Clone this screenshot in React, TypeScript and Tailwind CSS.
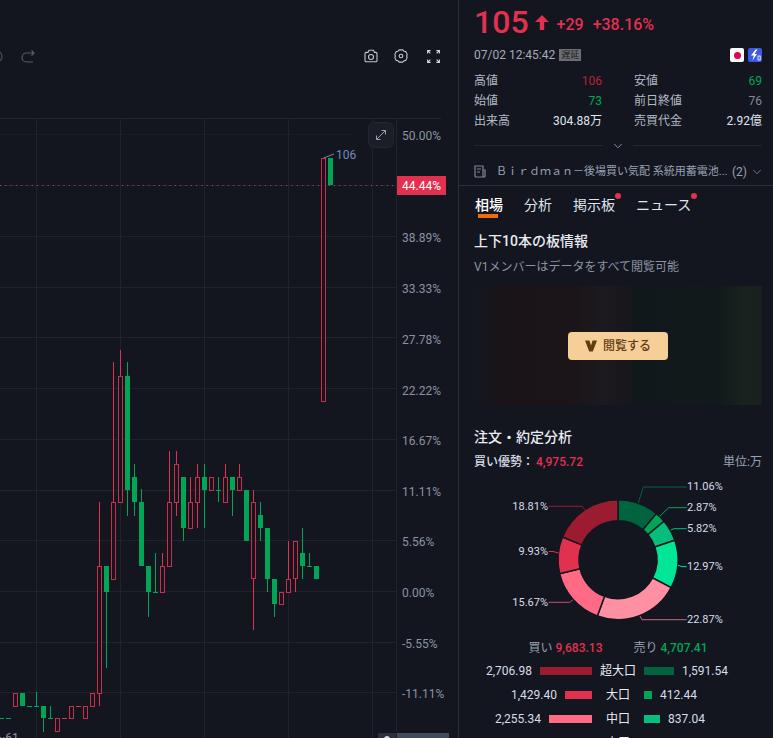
import React from "react";
import { ChevronDown } from "lucide-react";

const G = true;
const R = false;

// wickTop, wickBottom, bodyTop, bodyBottom, slot, isGreen
const candles: [number, number, number, number, number, boolean][] = [
    [718, 718, 718, 718, 0, G],
    [718, 718, 718, 718, 1, G],
    [693, 706, 693, 706, 2, R],
    [693, 706, 693, 706, 3, G],
    [706, 706, 706, 706, 4, G],
    [692, 706, 706, 706, 5, G],
    [706, 732, 706, 718, 6, G],
    [706, 718, 718, 718, 7, G],
    [718, 731, 718, 731, 8, R],
    [718, 718, 718, 718, 9, R],
    [706, 718, 706, 718, 10, R],
    [706, 706, 706, 706, 11, R],
    [706, 718, 706, 718, 12, R],
    [693, 706, 693, 706, 13, R],
    [502, 706, 566, 693, 14, R],
    [566, 668, 566, 592, 15, G],
    [362, 579, 502, 579, 16, R],
    [350, 502, 376, 502, 17, R],
    [362, 516, 376, 490, 18, G],
    [464, 516, 477, 502, 19, G],
    [489, 566, 502, 566, 20, G],
    [566, 617, 566, 592, 21, G],
    [553, 592, 592, 592, 22, G],
    [553, 592, 566, 592, 23, R],
    [451, 566, 502, 566, 24, R],
    [451, 516, 464, 502, 25, R],
    [477, 541, 477, 528, 26, G],
    [477, 528, 502, 528, 27, R],
    [464, 528, 477, 502, 28, R],
    [464, 528, 477, 490, 29, G],
    [477, 490, 477, 490, 30, R],
    [477, 502, 490, 490, 31, G],
    [464, 502, 477, 502, 32, R],
    [477, 516, 477, 490, 33, G],
    [464, 490, 477, 490, 34, R],
    [490, 541, 490, 541, 35, G],
    [490, 630, 502, 578, 36, R],
    [502, 541, 515, 528, 37, G],
    [528, 592, 528, 579, 38, G],
    [579, 617, 579, 604, 39, G],
    [592, 604, 592, 604, 40, R],
    [541, 592, 579, 592, 41, R],
    [541, 592, 541, 578, 42, R],
    [528, 579, 553, 566, 43, G],
    [553, 566, 566, 566, 44, G],
    [566, 579, 566, 579, 45, G],
    [158, 401, 158, 401, 46, R],
    [158, 185, 158, 185, 47, G],
];

const axisLabels: [string, number][] = [
    ["50.00%", 136],
    ["38.89%", 238],
    ["33.33%", 289],
    ["27.78%", 340],
    ["22.22%", 391],
    ["16.67%", 441],
    ["11.11%", 492],
    ["5.56%", 542],
    ["0.00%", 593],
    ["-5.55%", 644],
    ["-11.11%", 694],
];

const gridY = [185.5, 236.5, 287.5, 337.5, 388.5, 439.5, 490.5, 540.5, 591.5, 642.5, 692.5];

function CandleChart() {
    return (
        <svg viewBox="0 118 457 620" className="absolute inset-0 h-[620px] w-[457px]">
            <line x1="0" y1="118.5" x2="441" y2="118.5" stroke="#23262f" />
            <line x1="0" y1="134.5" x2="353" y2="134.5" stroke="#1a1d25" />
            {gridY.map((y) => (
                <line key={y} x1="0" y1={y} x2="396" y2={y} stroke="#20232b" />
            ))}
            {[36.5, 120.5, 204.5, 288.5, 372.5, 396.5].map((x) => (
                <line key={x} x1={x} y1="118" x2={x} y2="738" stroke="#20232b" />
            ))}
            <line x1="0" y1="185.5" x2="397" y2="185.5" stroke="#c04a60" strokeDasharray="1 4.3" />
            {candles.map(([wt, wb, bt, bb, i, green]) => {
                const x = 1.5 + 7 * i;
                const c = green ? "#00a656" : "#e2304f";
                return (
                    <g key={i}>
                        {wt < bt && <line x1={x} y1={wt} x2={x} y2={bt} stroke={c} />}
                        {wb > bb && <line x1={x} y1={bb} x2={x} y2={wb} stroke={c} />}
                        {bt === bb ? (
                            <rect x={x - 2.5} y={bt} width="5" height="1" fill={c} />
                        ) : green ? (
                            <rect x={x - 2.5} y={bt} width="5" height={bb - bt} fill={c} />
                        ) : (
                            <rect x={x - 2} y={bt + 0.5} width="4" height={bb - bt} fill="#13161f" stroke={c} strokeOpacity="0.9" />
                        )}
                    </g>
                );
            })}
            <path d="M323.5 158 L334 154" stroke="#7d8594" fill="none" />
            <text x="336" y="159" className="fill-[#6f8cc0] text-[12px]">106</text>
            {axisLabels.map(([t, y]) => (
                <text key={t} x="402" y={y + 4} className="fill-[#8a93a3] text-[12px]">
                    {t}
                </text>
            ))}
            <text x="-3" y="742" className="fill-[#8a93a3] text-[12px]">~61</text>
            <rect x="378" y="733" width="18" height="5" fill="#2b303b" />
            <rect x="397" y="733" width="52" height="5" fill="#414b5c" />
            <circle cx="387" cy="739" r="3" fill="#d5d8de" />
        </svg>
    );
}

function Toolbar() {
    return (
        <div className="flex h-[118px] items-center justify-between pb-[6px] pr-[18px]">
            <div className="-ml-[11px] flex items-center gap-[18px]">
                <svg viewBox="0 0 14 13" className="h-[13px] w-[14px]" fill="none" stroke="#4d5059" strokeWidth="1.2">
                    <path d="M0 1 H7.5 a5.5 5.5 0 0 1 0 11 H0" />
                </svg>
                <svg viewBox="0 0 14 13" className="h-[13px] w-[14px]" fill="none" stroke="#5a5d66" strokeWidth="1.2">
                    <path d="M13 3 H5.5 a4.5 4.5 0 0 0 0 9 H12 M10.5 0.5 L13 3 L10.5 5.5" />
                </svg>
            </div>
            <div className="flex items-center">
                <svg viewBox="0 0 14 14" className="h-[14px] w-[14px]" fill="none" stroke="#c3c7cf" strokeWidth="1.1">
                    <path d="M1 4.6 a1.2 1.2 0 0 1 1.2-1.2 H4 L5 1.2 H9.5 L10.5 3.4 H11.8 A1.2 1.2 0 0 1 13 4.6 V11.6 a1.2 1.2 0 0 1-1.2 1.2 H2.2 A1.2 1.2 0 0 1 1 11.6 Z" />
                    <circle cx="7" cy="8" r="2.5" />
                </svg>
                <svg viewBox="0 0 14 14" className="ml-4 h-[14px] w-[14px]" fill="none" stroke="#c3c7cf" strokeWidth="1.1">
                    <path d="M5.2 0.9 H8.8 L10 2.2 L11.9 2.6 L13.2 5.6 L12.6 7 L13.2 8.4 L11.9 11.4 L10 11.8 L8.8 13.1 H5.2 L4 11.8 L2.1 11.4 L0.8 8.4 L1.4 7 L0.8 5.6 L2.1 2.6 L4 2.2 Z" strokeLinejoin="round" />
                    <circle cx="7" cy="7" r="1.8" />
                </svg>
                <svg viewBox="0 0 13 13" className="ml-[19px] h-[13px] w-[13px]" fill="none" stroke="#d5d8de" strokeWidth="1.1">
                    <path d="M0.6 3.6 V0.6 H3.6 M0.8 0.8 L3.4 3.4 M9.4 0.6 H12.4 V3.6 M12.2 0.8 L9.6 3.4 M0.6 9.4 V12.4 H3.6 M0.8 12.2 L3.4 9.6 M12.4 9.4 V12.4 H9.4 M12.2 12.2 L9.6 9.6" />
                </svg>
            </div>
        </div>
    );
}

function Stat({ label, value, tone }: { label: string; value: string; tone: string }) {
    return (
        <div className="flex h-5 items-center justify-between text-[12px]">
            <span className="text-[#b4bac5]">{label}</span>
            <span className={tone}>{value}</span>
        </div>
    );
}

const slices = [
    { pct: 11.06, color: "#00643f" },
    { pct: 2.87, color: "#00a656" },
    { pct: 5.82, color: "#06bd7c" },
    { pct: 12.97, color: "#00e596" },
    { pct: 22.87, color: "#ff8fa3" },
    { pct: 15.67, color: "#ff6b84" },
    { pct: 9.93, color: "#e2304f" },
    { pct: 18.81, color: "#9b1c30" },
];

const donutLabels = [
    { t: "11.06%", x: 229, y: 14, anchor: "start", line: "M180.3 31 L185.3 15 H228.7", color: "#00643f" },
    { t: "2.87%", x: 229, y: 35, anchor: "start", line: "M201.7 44.3 L210.7 35.7 H228.7", color: "#00a656" },
    { t: "5.82%", x: 229, y: 56, anchor: "start", line: "M212.7 58 L216 56.7 H228.7", color: "#06bd7c" },
    { t: "12.97%", x: 229, y: 94, anchor: "start", line: "M220 93.3 L224 94.7 H228.7", color: "#00e596" },
    { t: "22.87%", x: 229, y: 147, anchor: "start", line: "M182 144 L184 147.7 H228.7", color: "#c96a7e" },
    { t: "15.67%", x: 90, y: 130, anchor: "end", line: "M115 127.7 L111.7 130.3 H90.7", color: "#c0536a" },
    { t: "9.93%", x: 90, y: 79, anchor: "end", line: "M100.7 81 L95 79.5 L90.7 79.5", color: "#e2304f" },
    { t: "18.81%", x: 90, y: 34, anchor: "end", line: "M127 37.7 L124 34.3 H90.7", color: "#9b1c30" },
];

function arcPath(start: number, end: number, cx: number, cy: number, ro: number, ri: number) {
    const p = (a: number, r: number) => {
        const rad = ((a - 90) * Math.PI) / 180;
        return `${cx + r * Math.cos(rad)} ${cy + r * Math.sin(rad)}`;
    };
    const large = end - start > 180 ? 1 : 0;
    return `M${p(start, ro)} A${ro} ${ro} 0 ${large} 1 ${p(end, ro)} L${p(end, ri)} A${ri} ${ri} 0 ${large} 0 ${p(start, ri)} Z`;
}

function Donut() {
    let acc = 0;
    return (
        <svg viewBox="0 0 315 166" className="-ml-4 h-[166px] w-[315px]">
            {slices.map((s) => {
                const start = acc * 3.6;
                acc += s.pct;
                return (
                    <path
                        key={s.pct}
                        d={arcPath(start, acc * 3.6, 160, 87.7, 60, 39)}
                        fill={s.color}
                        stroke="#13161f"
                        strokeWidth="1.5"
                    />
                );
            })}
            {donutLabels.map((l) => (
                <g key={l.t}>
                    <path d={l.line} stroke={l.color} fill="none" />
                    <text x={l.x} y={l.y + 4} textAnchor={l.anchor as "start" | "end"} className="fill-[#d6dde8] text-[11px]">
                        {l.t}
                    </text>
                </g>
            ))}
        </svg>
    );
}

const flowRows = [
    { buy: "2,706.98", buyBar: "w-[52px] bg-[#9b1c30]", name: "超大口", sellBar: "w-[30px] bg-[#00643f]", sell: "1,591.54" },
    { buy: "1,429.40", buyBar: "w-[27px] bg-[#e2304f]", name: "大口", sellBar: "w-[8px] bg-[#00a656]", sell: "412.44" },
    { buy: "2,255.34", buyBar: "w-[43px] bg-[#ff6b84]", name: "中口", sellBar: "w-[16px] bg-[#06bd7c]", sell: "837.04" },
    { buy: "", buyBar: "", name: "小口", sellBar: "", sell: "" },
];

function SidePanel() {
    return (
        <div className="h-[738px] w-[315px] shrink-0 overflow-hidden border-l border-[#2a2d36] pl-[15px] pr-[11px]">
            <div className="flex h-11 items-center">
                <span className="text-[32px] font-medium leading-none text-[#e2304f]">105</span>
                <svg viewBox="0 0 14 15" className="ml-[6px] h-[15px] w-[14px]" fill="#e2304f">
                    <path d="M7 0 L14 7 H9.2 V15 H4.8 V7 H0 Z" />
                </svg>
                <span className="ml-[8px] mt-[6px] text-[16px] font-medium text-[#e2304f]">+29</span>
                <span className="ml-[9px] mt-[6px] text-[16px] font-medium text-[#e2304f]">+38.16%</span>
            </div>
            <div className="mt-px flex h-5 items-center text-[12px] text-[#a3abb8]">
                <span>07/02 12:45:42</span>
                <span className="ml-1 h-3 bg-[#6b6d70] px-[2px] text-[9px] leading-3 text-[#1b1d22]">遅延</span>
                <div className="ml-auto flex items-center gap-1">
                    <div className="flex h-[14px] w-[14px] items-center justify-center rounded-[2px] bg-white">
                        <div className="h-[7px] w-[7px] rounded-full bg-[#e2004f]" />
                    </div>
                    <div className="flex h-[14px] w-[14px] items-center justify-center rounded-[2px] bg-[#3d5be0]">
                        <svg viewBox="0 0 14 14" className="h-[14px] w-[14px]" fill="white">
                            <path d="M7.5 1.5 L3 7.5 H5.8 L4.5 12.5 L9 6 H6.5 L9.5 1.5 Z" />
                            <rect x="10" y="8" width="2.2" height="4" fill="none" stroke="white" strokeWidth="0.8" />
                        </svg>
                    </div>
                </div>
            </div>
            <div className="mt-[6px] grid grid-cols-2 gap-x-8">
                <Stat label="高値" value="106" tone="text-[#b5233d]" />
                <Stat label="安値" value="69" tone="text-[#00a656]" />
                <Stat label="始値" value="73" tone="text-[#00a656]" />
                <Stat label="前日終値" value="76" tone="text-[#7f8a9a]" />
                <Stat label="出来高" value="304.88万" tone="text-[#dfe5ee]" />
                <Stat label="売買代金" value="2.92億" tone="text-[#dfe5ee]" />
            </div>
            <div className="flex h-[29px] items-center gap-2">
                <div className="h-px flex-1 bg-[#23262f]" />
                <ChevronDown className="h-[14px] w-[14px] text-[#9aa3b2]" strokeWidth={1.5} />
                <div className="h-px flex-1 bg-[#23262f]" />
            </div>
            <div className="-ml-[15px] -mr-[11px] flex h-[26px] items-start border-b border-[#2a2d36] pl-[15px] pt-[3px] text-[11px] leading-[18px] text-[#98a2b3]">
                <svg viewBox="0 0 12 13" className="mt-[2px] h-[13px] w-[12px] shrink-0" fill="none" stroke="#7d8594" strokeWidth="1.2">
                    <path d="M1 1 H9 V12 H2 a1 1 0 0 1-1-1 Z M9 5 H11 V11 a1 1 0 0 1-1 1 H9 M3 4 H7 M3 7 H6" />
                </svg>
                <span className="ml-[10px] w-[236px] shrink-0 whitespace-nowrap">Ｂｉｒｄｍａｎ－後場買い気配 系統用蓄電池...</span>
                <span className="text-[12px]">(2)</span>
                <ChevronDown className="ml-[3px] mt-[2px] h-[14px] w-[14px] text-[#7d8594]" strokeWidth={1.5} />
            </div>
            <div className="ml-px flex h-[33px] items-start gap-[21px] pt-[9px] text-[14px] leading-5 text-[#dfe5ee]">
                <div className="relative font-medium text-white">
                    相場
                    <div className="absolute left-[3px] top-[19px] h-1 w-5 bg-[#ee6c0a]" />
                </div>
                <div>分析</div>
                <div className="relative">
                    掲示板
                    <div className="absolute -right-[6px] -top-[2px] h-[6px] w-[6px] rounded-full bg-[#e2304f]" />
                </div>
                <div className="relative">
                    ニュース
                    <div className="absolute -right-[6px] -top-[2px] h-[6px] w-[6px] rounded-full bg-[#e2304f]" />
                </div>
            </div>
            <h2 className="mt-[12px] text-[14px] font-medium leading-5 text-[#e8ecf2]">上下10本の板情報</h2>
            <p className="mt-[7px] text-[12px] leading-[18px] text-[#8a93a3]">V1メンバーはデータをすべて閲覧可能</p>
            <div className="mt-[10px] flex h-[119px] items-center justify-center bg-[linear-gradient(90deg,#13171f_0%,#1a1419_10%,#1b1519_35%,#1c1a1f_44%,#1a171c_52%,#11181c_56%,#111a1b_85%,#18231f_94%,#17211f_100%)]">
                <button className="flex h-7 w-[100px] items-center justify-center gap-[6px] rounded bg-[#f5ce98] text-[12px] font-medium text-[#5e3d12]">
                    <svg viewBox="0 0 12 12" className="h-3 w-3" fill="#5e3d12">
                        <path d="M0 0.5 H4.4 L6 5.5 L7.6 0.5 H12 L7.8 11.5 H4.2 Z" />
                    </svg>
                    閲覧する
                </button>
            </div>
            <h2 className="mt-[22px] text-[14px] font-medium leading-5 text-[#e8ecf2]">注文・約定分析</h2>
            <div className="mt-[5px] flex h-5 items-center text-[12px]">
                <span className="font-medium text-[#d6dde8]">買い優勢：</span>
                <span className="ml-[2px] font-medium text-[#e2304f]">4,975.72</span>
                <span className="ml-auto text-[#98a2b3]">単位:万</span>
            </div>
            <Donut />
            <div className="flex h-5 items-center justify-center gap-[31px] text-[12px]">
                <span className="text-[#98a2b3]">
                    買い<span className="ml-[3px] font-medium text-[#e2304f]">9,683.13</span>
                </span>
                <span className="text-[#98a2b3]">
                    売り<span className="ml-[3px] font-medium text-[#00a656]">4,707.41</span>
                </span>
            </div>
            <div className="mt-[1px]">
                {flowRows.map((r) => (
                    <div key={r.name} className="grid h-6 grid-cols-[1fr_52px_1fr] items-center text-[12px] text-[#d6dde8]">
                        <div className="flex items-center justify-end gap-2">
                            {r.buy}
                            <div className={`h-2 ${r.buyBar}`} />
                        </div>
                        <div className="text-center text-[#e8ecf2]">{r.name}</div>
                        <div className="flex items-center gap-2">
                            <div className={`h-2 ${r.sellBar}`} />
                            {r.sell}
                        </div>
                    </div>
                ))}
            </div>
        </div>
    );
}

export default function App() {
    return (
        <div className="flex h-[738px] w-[773px] overflow-hidden bg-[#13161f] font-[Roboto,'Noto_Sans_CJK_JP',sans-serif]">
            <div className="relative h-[738px] w-[458px] shrink-0 overflow-hidden">
                <Toolbar />
                <div className="relative h-[620px] w-[457px]">
                    <CandleChart />
                    <button className="absolute left-[368px] top-[4px] flex h-[26px] w-[26px] items-center justify-center rounded-md border border-[#23262f] bg-[#1b1e27]">
                        <svg viewBox="0 0 10 10" className="h-[10px] w-[10px]" fill="none" stroke="#9aa0ab" strokeWidth="1">
                            <path d="M0.5 9.5 L9.5 0.5 M5.5 0.5 H9.5 V4.5 M0.5 5.5 V9.5 H4.5" />
                        </svg>
                    </button>
                    <div className="absolute left-[397px] top-[58px] flex h-[19px] w-[49px] items-center justify-center bg-[#e2304f] text-[12px] text-white">
                        44.44%
                    </div>
                </div>
            </div>
            <SidePanel />
        </div>
    );
}
